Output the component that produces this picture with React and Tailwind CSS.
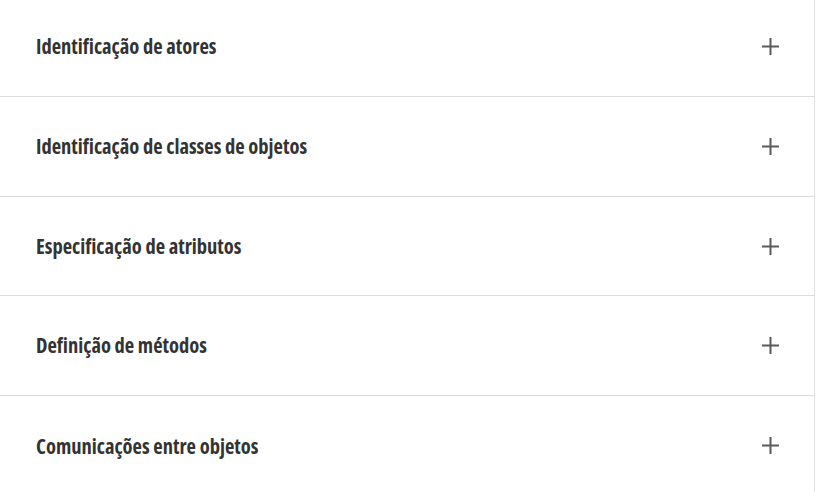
const ITEMS = [
  'Identificação de atores',
  'Identificação de classes de objetos',
  'Especificação de atributos',
  'Definição de métodos',
  'Comunicações entre objetos',
];

export default function App() {
  return (
    <div className="w-[816px] h-[492px] overflow-hidden bg-white">
      <div className="w-[815px] -mt-[2.5px] border-r border-[#e2e2e2] font-['Open_Sans',sans-serif]">
        {ITEMS.map((label, i) => (
          <AccordionRow key={label} label={label} last={i === ITEMS.length - 1} />
        ))}
      </div>
    </div>
  );
}

function AccordionRow({ label, last }) {
  return (
    <div
      className={`flex items-center justify-between h-[99.67px] pl-[36px] pr-[36px] ${
        last ? '' : 'border-b border-[#dcdcdc]'
      }`}
    >
      <span className="text-[20.5px] font-bold text-[#333] font-stretch-[75%]">
        {label}
      </span>
      <svg width="17" height="17" viewBox="0 0 17 17" className="-mr-[1px]">
        <rect x="7.5" y="0" width="2" height="17" fill="#5a5a5a" />
        <rect x="0" y="7.5" width="17" height="2" fill="#5a5a5a" />
      </svg>
    </div>
  );
}
